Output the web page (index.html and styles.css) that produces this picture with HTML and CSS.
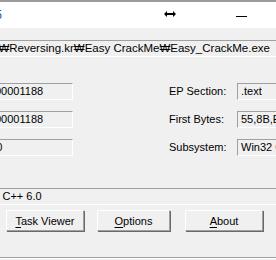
FILE: index.html
```html
<!DOCTYPE html>
<html lang="en">
<head>
<meta charset="UTF-8" />
<meta name="viewport" content="width=device-width, initial-scale=1" />
<title>PEiD v0.95</title>
<link rel="stylesheet" href="styles.css">
</head>
<body>
  <div class="window">
    <!-- Title bar (only the right end of the caption is in view) -->
    <div class="titlebar">
      <span class="caption">PEiD v0.95</span>
      <span class="resize-icon">
        <svg width="12" height="6" viewBox="0 0 12 6">
          <path d="M0 3 L3 0 L3 6 Z M12 3 L9 0 L9 6 Z" fill="#000"/>
          <rect x="2" y="2" width="8" height="2" fill="#000"/>
        </svg>
      </span>
      <span class="min-icon"></span>
    </div>

    <div class="dialog">
      <!-- File path -->
      <div class="path-box">
        <span>C:&#8361;Documents and Settings&#8361;Desktop&#8361;Reversing.kr&#8361;Easy CrackMe&#8361;Easy_CrackMe.exe</span>
      </div>

      <!-- Entrypoint / EP Section etc. -->
      <div class="info-grid">
        <div class="field left-field">00001188</div>
        <span class="label">EP Section:</span>
        <div class="field">.text</div>

        <div class="field left-field">00001188</div>
        <span class="label">First Bytes:</span>
        <div class="field">55,8B,EC,6A</div>

        <div class="field left-field short">6.0</div>
        <span class="label">Subsystem:</span>
        <div class="field">Win32 GUI</div>
      </div>

      <div class="field linker">Microsoft Visual C++ 6.0</div>

      <div class="buttons">
        <button class="btn"><u>T</u>ask Viewer</button>
        <button class="btn btn-narrow"><u>O</u>ptions</button>
        <button class="btn"><u>A</u>bout</button>
      </div>

      <div class="rule"></div>
    </div>
  </div>
</body>
</html>
```

FILE: styles.css
```css
/* --- Reset and basics --- */
* {
  box-sizing: border-box;
  margin: 0;
  padding: 0;
}
html, body {
  width: 276px;
  height: 260px;
  overflow: hidden;
  background: #f0f0f0;
  font-family: "Liberation Sans", Arial, sans-serif;
  font-size: 11px;
  color: #000;
}

/* --- Title bar --- */
.titlebar {
  height: 28px;
  border-top: 2px solid #9b9b9b;
  background: #fff;
  display: flex;
  align-items: center;
}
.caption {
  width: 60px;
  margin-left: -58px;
  text-align: right;
  white-space: nowrap;
  font-size: 12px;
  color: #1d4fa3;
  margin-top: -1px;
}
.resize-icon {
  display: flex;
  margin-left: 162px;
  margin-top: -3px;
}
.min-icon {
  width: 11px;
  height: 1px;
  background: #000;
  margin-left: 60px;
  margin-top: 2px;
}

/* --- Dialog body --- */
.dialog {
  padding-top: 12px;
}

/* Read-only edit boxes */
.field {
  height: 17px;
  line-height: 15px;
  padding-left: 3px;
  white-space: nowrap;
  overflow: hidden;
  background: #f0f0f0;
  border-top: 1px solid #a0a0a0;
  border-left: 1px solid #a0a0a0;
  border-right: 1px solid #fff;
  border-bottom: 1px solid #fff;
}

.path-box {
  height: 17px;
  line-height: 15px;
  padding-right: 6px;
  display: flex;
  justify-content: flex-end;
  white-space: nowrap;
  font-size: 11.5px;
  border-top: 1px solid #a0a0a0;
  border-bottom: 1px solid #fff;
}

.info-grid {
  display: grid;
  grid-template-columns: 83px 164px 60px;
  grid-auto-rows: 17px;
  row-gap: 11px;
  margin: 26px 0 0 -10px;
}
.label {
  padding-left: 96px;
  line-height: 17px;
  white-space: nowrap;
}
.left-field {
  padding-left: 4px;
}
.short {
  text-indent: -8px;
}

.linker {
  width: 380px;
  margin: 32px 0 0 -82px;
}

/* --- Buttons --- */
.buttons {
  display: flex;
  margin: 5px 0 0 6px;
}
.btn {
  width: 80px;
  height: 21px;
  margin-right: 13px;
  font: inherit;
  color: #000;
  background: #f0f0f0;
  border: 1px solid #a0a0a0;
  border-top-color: #fff;
  border-left-color: #fff;
  box-shadow: 1px 1px #696969;
}
.btn-narrow {
  width: 75px;
  margin-right: 15px;
}
.btn u {
  text-underline-offset: 2px;
}

.rule {
  height: 0;
  margin-top: 26px;
  border-top: 1px solid #a0a0a0;
  border-bottom: 1px solid #fff;
}
```
